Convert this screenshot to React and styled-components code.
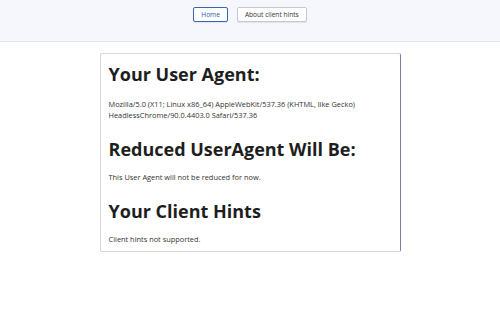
import React from "react";
import styled, { createGlobalStyle } from "styled-components";

const Global = createGlobalStyle`
  html, body { margin: 0; padding: 0; background: #fff; }
  body { font-family: "Open Sans", "Noto Sans", sans-serif; color: #222; }
`;

const Header = styled.header`
  height: 42px;
  background: #f5f7fc;
  border-bottom: 1px solid #e2e4ea;
  display: flex;
  justify-content: center;
  align-items: flex-start;
  gap: 9px;
  padding-top: 7px;
  box-sizing: border-box;
`;

const NavButton = styled.button`
  font-family: "Open Sans", sans-serif;
  font-size: 6.6px;
  height: 15px;
  padding: 0 7px;
  background: #fff;
  color: ${(p) => (p.$active ? "#2a55a8" : "#333")};
  border: 1px solid ${(p) => (p.$active ? "#3a64b4" : "#c8c8cc")};
  border-radius: 2px;
  box-shadow: 0 1px 1px rgba(0, 0, 0, 0.08);
  cursor: pointer;
`;

const Main = styled.main`
  display: flex;
  justify-content: center;
  padding-top: 11px;
`;

const Card = styled.section`
  width: 301px;
  box-sizing: border-box;
  border: 1px solid #d8d8dc;
  border-right: 1px solid #7c7fa0;
  border-radius: 2px;
  padding: 8px 8px 6px 8px;
  background: #fff;
`;

const Heading = styled.h2`
  font-size: 18px;
  font-weight: 700;
  margin: 0;
  line-height: 24px;
  color: #1e1e1e;
  margin-top: ${(p) => p.$mt || 0}px;
`;

const Text = styled.p`
  font-size: 7.4px;
  line-height: 11px;
  margin: ${(p) => p.$mt || 0}px 0 0 0;
  color: #333;
`;

export default function App() {
  return (
    <>
      <Global />
      <Header>
        <NavButton $active>Home</NavButton>
        <NavButton>About client hints</NavButton>
      </Header>
      <Main>
        <Card>
          <Heading>Your User Agent:</Heading>
          <Text $mt={13}>
            Mozilla/5.0 (X11; Linux x86_64) AppleWebKit/537.36 (KHTML, like Gecko)
            <br />
            HeadlessChrome/90.0.4403.0 Safari/537.36
          </Text>
          <Heading $mt={16}>Reduced UserAgent Will Be:</Heading>
          <Text $mt={11}>This User Agent will not be reduced for now.</Text>
          <Heading $mt={16}>Your Client Hints</Heading>
          <Text $mt={11}>Client hints not supported.</Text>
        </Card>
      </Main>
    </>
  );
}
